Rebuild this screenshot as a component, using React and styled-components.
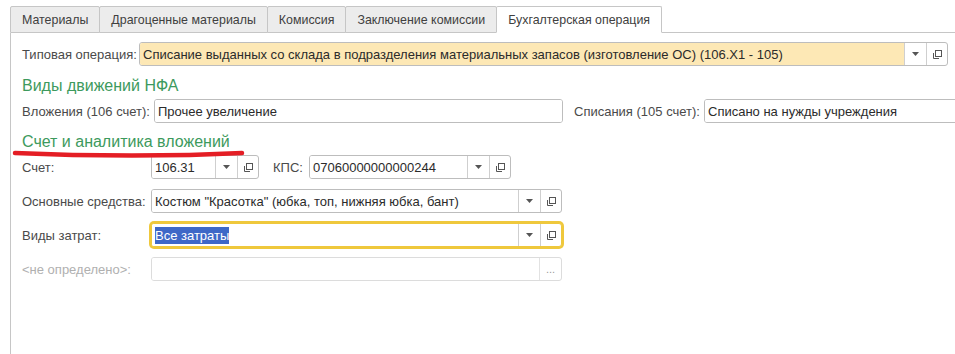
import React from "react";
import styled, { createGlobalStyle } from "styled-components";

const Global = createGlobalStyle`
  html, body { margin: 0; padding: 0; background: #fff; }
  body { font-family: "Liberation Sans", Arial, sans-serif; font-size: 13px; color: #333; }
  #root { width: 955px; height: 354px; overflow: hidden; }
`;

const Page = styled.div`
  position: relative;
  width: 955px;
  height: 354px;
  overflow: hidden;
  padding-top: 6px;
  box-sizing: border-box;
  display: flex;
  flex-direction: column;
`;

const TabBar = styled.div`
  display: flex;
  padding-left: 10px;
  height: 27px;
  flex: none;
`;

const Tab = styled.div`
  box-sizing: border-box;
  height: 27px;
  padding: 0 11px 0 11px;
  display: flex;
  align-items: center;
  font-size: 12.4px;
  border: 1px solid #c6c6c6;
  border-bottom: ${(p) => (p.$active ? "1px solid #fff" : "1px solid #c6c6c6")};
  margin-left: -1px;
  border-radius: 2px 2px 0 0;
  background: ${(p) => (p.$active ? "#fff" : "#ececec")};
  color: #404040;
  white-space: nowrap;
  &:first-child { margin-left: 0; }
`;

const TabFill = styled.div`
  flex: 1;
  border-bottom: 1px solid #c6c6c6;
`;

const Panel = styled.div`
  flex: 1;
  margin-left: 10px;
  border-left: 1px solid #c6c6c6;
  padding: 9px 7px 0 11px;
  display: flex;
  flex-direction: column;
`;

const Row = styled.div`
  display: flex;
  align-items: center;
  height: 24px;
  margin-bottom: ${(p) => p.$mb ?? 10}px;
  white-space: nowrap;
`;

const Label = styled.div`
  flex: none;
  width: ${(p) => (p.$w ? `${p.$w}px` : "auto")};
  margin-left: ${(p) => p.$ml ?? 0}px;
  margin-right: ${(p) => p.$mr ?? 0}px;
  color: ${(p) => (p.$muted ? "#b0b0b0" : "#4a4a4a")};
`;

const Heading = styled.div`
  font-size: 16px;
  color: #3d9a5d;
  height: 20px;
  line-height: 20px;
  margin: ${(p) => p.$m};
`;

const Field = styled.div`
  flex: none;
  box-sizing: border-box;
  width: ${(p) => p.$w}px;
  height: 24px;
  display: flex;
  border: 1px solid ${(p) => (p.$focus ? "#efc83c" : p.$muted ? "#dcdcdc" : "#bdbdbd")};
  box-shadow: ${(p) => (p.$focus ? "0 0 0 2px #efc83c" : "none")};
  border-radius: 3px;
  background: #fff;
  overflow: hidden;
`;

const FieldText = styled.div`
  flex: 1;
  display: flex;
  align-items: center;
  padding-left: 3px;
  background: ${(p) => (p.$yellow ? "#fde8b5" : "#fff")};
  color: #2b2b2b;
  overflow: hidden;
`;

const Selected = styled.span`
  background: #3e68c7;
  color: #fff;
  padding: 1px 0;
`;

const SideBtn = styled.div`
  flex: none;
  width: ${(p) => p.$w}px;
  border-left: 1px solid ${(p) => (p.$muted ? "#e2e2e2" : "#cfcfcf")};
  display: flex;
  align-items: center;
  justify-content: center;
  color: #9a9a9a;
  font-size: 11px;
`;

const Mark = styled.svg`
  position: absolute;
  left: 12px;
  top: 149px;
  pointer-events: none;
`;

const Arrow = () => (
  <svg width="7" height="4" viewBox="0 0 7 4">
    <path d="M0 0 H7 L3.5 4 Z" fill="#555" />
  </svg>
);

const OpenIcon = () => (
  <svg width="11" height="11" viewBox="0 0 11 11">
    <rect x="3.5" y="1.5" width="6" height="6" fill="none" stroke="#555" strokeWidth="1" />
    <path d="M1.5 4 V9.5 H7" fill="none" stroke="#555" strokeWidth="1" />
  </svg>
);

const Combo = ({ w, children, yellow, focus, open = true, drop = true }) => (
  <Field $w={w} $focus={focus}>
    <FieldText $yellow={yellow}>{children}</FieldText>
    {drop && (
      <SideBtn $w={21}>
        <Arrow />
      </SideBtn>
    )}
    {open && (
      <SideBtn $w={20}>
        <OpenIcon />
      </SideBtn>
    )}
  </Field>
);

export default function App() {
  const tabs = ["Материалы", "Драгоценные материалы", "Комиссия", "Заключение комиссии", "Бухгалтерская операция"];
  return (
    <Page>
      <Global />
      <TabBar>
        {tabs.map((t, i) => (
          <Tab key={t} $active={i === 4}>{t}</Tab>
        ))}
        <TabFill />
      </TabBar>
      <Panel>
        <Row $mb={10}>
          <Label $w={117}>Типовая операция:</Label>
          <Combo w={809} yellow>
            Списание выданных со склада в подразделения материальных запасов (изготовление ОС) (106.X1 - 105)
          </Combo>
        </Row>
        <Heading $m="0 0 3px 0">Виды движений НФА</Heading>
        <Row $mb={9}>
          <Label $w={132}>Вложения (106 счет):</Label>
          <Field $w={409}>
            <FieldText>Прочее увеличение</FieldText>
          </Field>
          <Label $ml={11} $w={130}>Списания (105 счет):</Label>
          <Field $w={400}>
            <FieldText>Списано на нужды учреждения</FieldText>
          </Field>
        </Row>
        <Heading $m="0 0 3px 0">Счет и аналитика вложений</Heading>
        <Row>
          <Label $w={129}>Счет:</Label>
          <Combo w={108}>106.31</Combo>
          <Label $ml={14} $w={36}>КПС:</Label>
          <Combo w={202}>07060000000000244</Combo>
        </Row>
        <Row>
          <Label $w={129}>Основные средства:</Label>
          <Combo w={411}>Костюм "Красотка" (юбка, топ, нижняя юбка, бант)</Combo>
        </Row>
        <Row>
          <Label $w={129}>Виды затрат:</Label>
          <Combo w={411} focus>
            <Selected>Все затраты</Selected>
          </Combo>
        </Row>
        <Row>
          <Label $w={129} $muted>&lt;не определено&gt;:</Label>
          <Field $w={411} $muted>
            <FieldText />
            <SideBtn $w={21} $muted>...</SideBtn>
          </Field>
        </Row>
      </Panel>
      <Mark width="234" height="10" viewBox="0 0 234 10">
        <path d="M3 4 Q60 6.5 120 6.5 T230 4" fill="none" stroke="#e41e25" strokeWidth="4.5" strokeLinecap="round" />
      </Mark>
    </Page>
  );
}
